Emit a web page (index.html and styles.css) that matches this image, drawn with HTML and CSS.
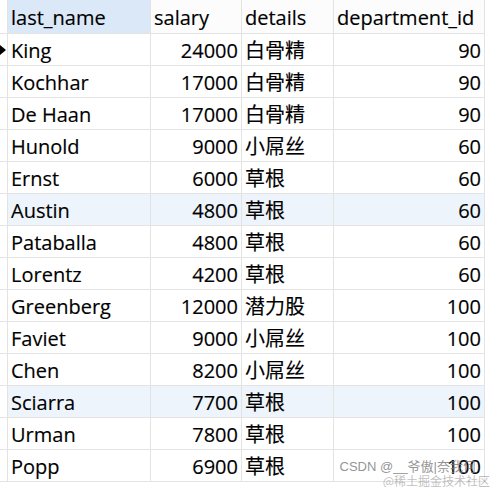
FILE: index.html
```html
<!DOCTYPE html>
<html>
<head>
<meta charset="utf-8">
<link rel="stylesheet" href="styles.css">
</head>
<body>
<div class="grid">
  <div class="c g hd"></div><div class="c hd sel">last_name</div><div class="c hd">salary</div><div class="c hd">details</div><div class="c hd">department_id</div>

  <div class="c g"><span class="arrow"></span></div><div class="c">King</div><div class="c n">24000</div><div class="c">白骨精</div><div class="c n">90</div>
  <div class="c g"></div><div class="c">Kochhar</div><div class="c n">17000</div><div class="c">白骨精</div><div class="c n">90</div>
  <div class="c g"></div><div class="c">De Haan</div><div class="c n">17000</div><div class="c">白骨精</div><div class="c n">90</div>
  <div class="c g"></div><div class="c">Hunold</div><div class="c n">9000</div><div class="c">小屌丝</div><div class="c n">60</div>
  <div class="c g"></div><div class="c">Ernst</div><div class="c n">6000</div><div class="c">草根</div><div class="c n">60</div>
  <div class="c g"></div><div class="c hl">Austin</div><div class="c n hl">4800</div><div class="c hl">草根</div><div class="c n hl">60</div>
  <div class="c g"></div><div class="c">Pataballa</div><div class="c n">4800</div><div class="c">草根</div><div class="c n">60</div>
  <div class="c g"></div><div class="c">Lorentz</div><div class="c n">4200</div><div class="c">草根</div><div class="c n">60</div>
  <div class="c g"></div><div class="c">Greenberg</div><div class="c n">12000</div><div class="c">潜力股</div><div class="c n">100</div>
  <div class="c g"></div><div class="c">Faviet</div><div class="c n">9000</div><div class="c">小屌丝</div><div class="c n">100</div>
  <div class="c g"></div><div class="c">Chen</div><div class="c n">8200</div><div class="c">小屌丝</div><div class="c n">100</div>
  <div class="c g"></div><div class="c hl">Sciarra</div><div class="c n hl">7700</div><div class="c hl">草根</div><div class="c n hl">100</div>
  <div class="c g"></div><div class="c">Urman</div><div class="c n">7800</div><div class="c">草根</div><div class="c n">100</div>
  <div class="c g"></div><div class="c">Popp</div><div class="c n">6900</div><div class="c">草根</div><div class="c n">100</div>
</div>
<div class="wm">
  <div class="wm1">CSDN @__爷傲|奈我何</div>
  <div class="wm2">@稀土掘金技术社区</div>
</div>
</body>
</html>
```

FILE: styles.css
```css
html, body {
  margin: 0;
  padding: 0;
  background: #ffffff;
}
body {
  position: relative;
  width: 492px;
  height: 487px;
  overflow: hidden;
  font-family: "Open Sans", "Noto Sans CJK SC", sans-serif;
  font-size: 20px;
  color: #000;
}
.grid {
  display: grid;
  grid-template-columns: 8px 143px 91px 92px 151px;
  grid-template-rows: 34px repeat(14, 32px);
  width: 485px;
}
.c {
  box-sizing: border-box;
  border-right: 1px solid #e3e3e3;
  border-bottom: 1px solid #e3e3e3;
  display: flex;
  align-items: center;
  padding: 2px 3px 0 3px;
  white-space: nowrap;
  overflow: hidden;
  line-height: 1;
  -webkit-text-stroke: 0.15px #000;
}
.n {
  justify-content: flex-end;
}
.g {
  padding: 0;
  background: #fff;
}
.hd {
  background: #fcfcfc;
}
.hd.g {
  background: #fff;
}
.sel {
  background: #dae8f7;
}
.hl {
  background: #eef4fb;
}
.arrow {
  display: block;
  width: 0;
  height: 0;
  border-top: 5px solid transparent;
  border-bottom: 5px solid transparent;
  border-left: 6px solid #000;
  margin-top: 1px;
}
.wm {
  position: absolute;
  right: 2px;
  bottom: 0;
  text-align: right;
  pointer-events: none;
}
.wm1 {
  font-family: "Liberation Sans", "Noto Sans CJK SC", sans-serif;
  font-size: 13px;
  color: rgba(120,120,120,0.8);
  margin-right: 14px;
  line-height: 15px;
}
.wm2 {
  font-family: "Noto Sans CJK SC", sans-serif;
  font-size: 12px;
  color: rgba(150,150,150,0.6);
  line-height: 13px;
}
```
